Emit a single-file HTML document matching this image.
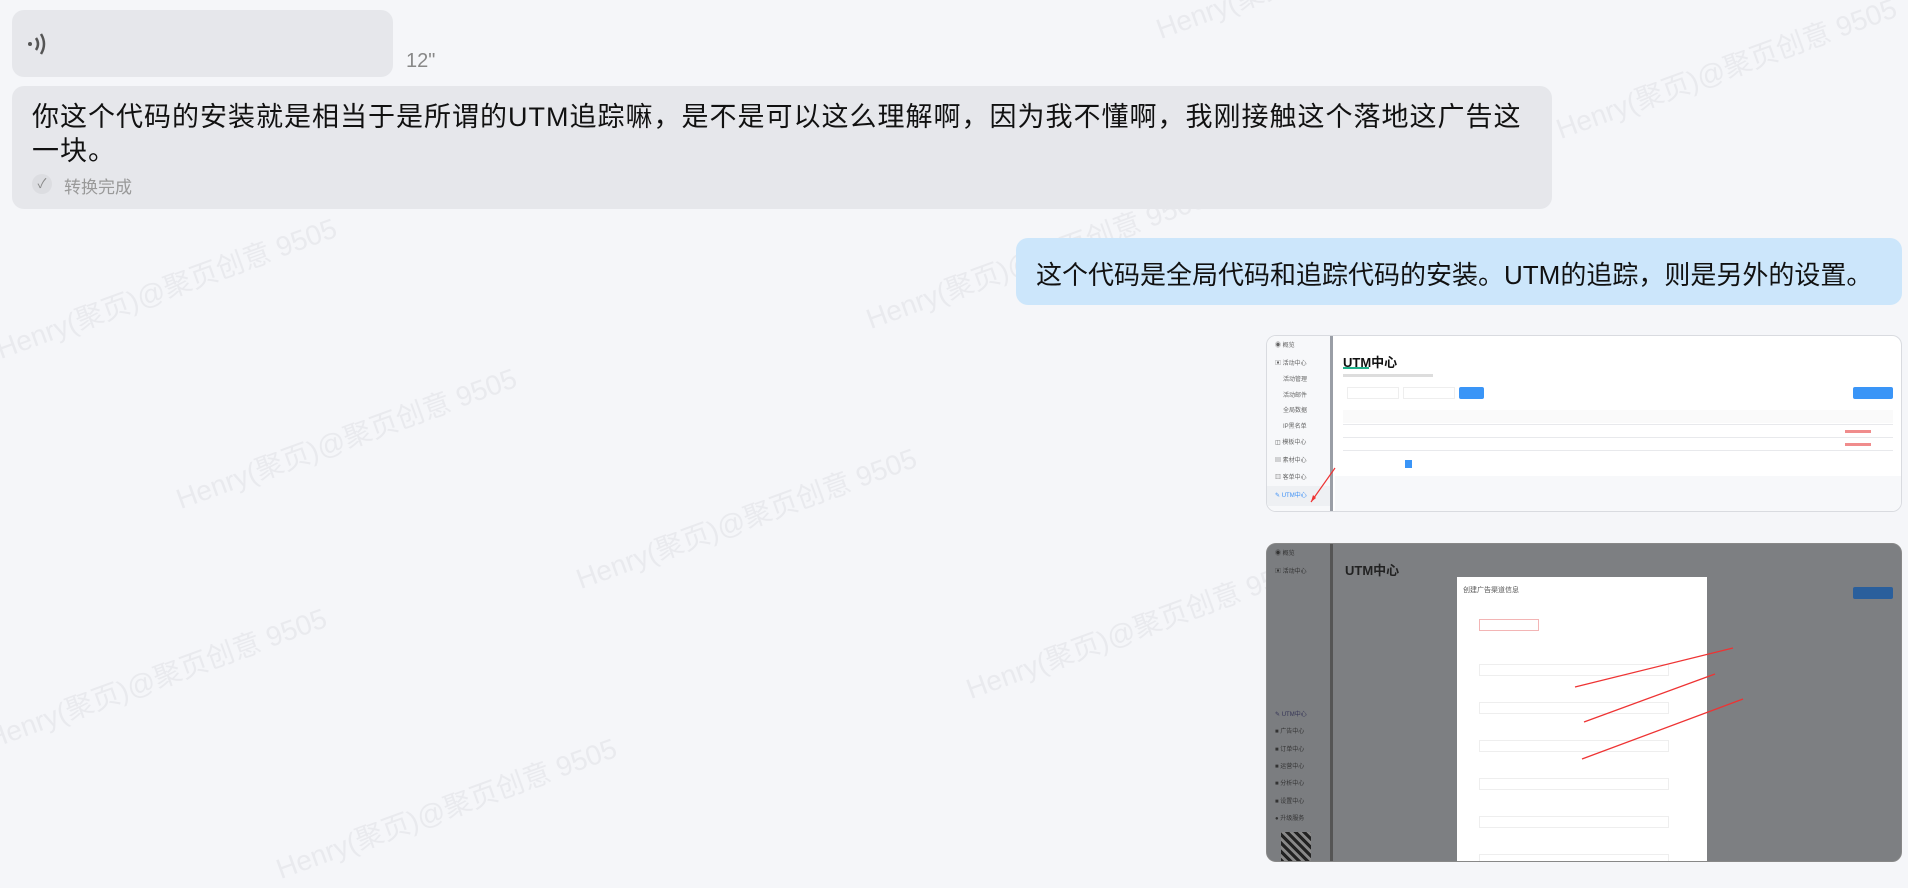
<!DOCTYPE html>
<html><head><meta charset="utf-8"><style>
*{margin:0;padding:0;box-sizing:border-box}
body{width:1908px;height:882px;background:#f5f6f9;position:relative;overflow:hidden;font-family:"Liberation Sans","Noto Sans CJK SC",sans-serif;color:#111}
.b{position:absolute;border-radius:12px}
.wm{position:absolute;color:#e9eaee;font-size:28px;transform:rotate(-20deg);white-space:nowrap;transform-origin:left top}
.shot{position:absolute;border-radius:10px;overflow:hidden;border:1px solid #d9dbe0}
.side{position:absolute;left:0;top:0;bottom:0;width:66px;border-right:3px solid #9a9ea6}
.si{position:absolute;left:8px;font-size:6px;color:#666}
.row{position:absolute;height:1px;background:#e8e9ec}
</style></head><body>
<div class="wm" style="left:-10px;top:330px">Henry(聚页)@聚页创意 9505</div>
<div class="wm" style="left:170px;top:480px">Henry(聚页)@聚页创意 9505</div>
<div class="wm" style="left:570px;top:560px">Henry(聚页)@聚页创意 9505</div>
<div class="wm" style="left:-20px;top:720px">Henry(聚页)@聚页创意 9505</div>
<div class="wm" style="left:270px;top:850px">Henry(聚页)@聚页创意 9505</div>
<div class="wm" style="left:860px;top:300px">Henry(聚页)@聚页创意 9505</div>
<div class="wm" style="left:960px;top:670px">Henry(聚页)@聚页创意 9505</div>
<div class="wm" style="left:1550px;top:110px">Henry(聚页)@聚页创意 9505</div>
<div class="wm" style="left:1150px;top:10px">Henry(聚页)@聚页创意 9505</div>

<div class="b" style="left:12px;top:10px;width:381px;height:67px;background:#e6e7eb"></div>
<svg style="position:absolute;left:26px;top:32px" width="26" height="24" viewBox="0 0 26 24"><circle cx="4" cy="12" r="2" fill="#555"/><path d="M10 6 Q14 12 10 18" stroke="#555" stroke-width="2.5" fill="none"/><path d="M15 2 Q21 12 15 22" stroke="#555" stroke-width="2.5" fill="none"/></svg>
<div style="position:absolute;left:406px;top:50px;font-size:20px;color:#888">12"</div>

<div class="b" style="left:12px;top:86px;width:1540px;height:123px;background:#e6e7eb"></div>
<div style="position:absolute;left:32px;top:100px;white-space:nowrap;font-size:27px;line-height:34px;letter-spacing:1px">你这个代码的安装就是相当于是所谓的UTM追踪嘛，是不是可以这么理解啊，因为我不懂啊，我刚接触这个落地这广告这<br>一块。</div>
<div style="position:absolute;left:32px;top:174px;width:20px;height:20px;border-radius:50%;background:#dcdde1;color:#888;font-size:13px;text-align:center;line-height:20px">✓</div>
<div style="position:absolute;left:64px;top:173px;font-size:17px;color:#999">转换完成</div>

<div class="b" style="left:1016px;top:238px;width:886px;height:67px;background:#cce6fb"></div>
<div style="position:absolute;left:1036px;top:255px;font-size:26px;white-space:nowrap">这个代码是全局代码和追踪代码的安装。UTM的追踪，则是另外的设置。</div>

<div class="shot" style="left:1266px;top:335px;width:636px;height:177px;background:#fff">
 <div class="side" style="background:#f7f8fa">
  <div class="si" style="top:4px">◉ 概览</div><div class="si" style="top:22px">▣ 活动中心</div><div class="si" style="left:16px;top:38px">活动管理</div><div class="si" style="left:16px;top:54px">活动邮件</div><div class="si" style="left:16px;top:69px">全局数据</div><div class="si" style="left:16px;top:85px">IP黑名单</div><div class="si" style="top:101px">◫ 模板中心</div><div class="si" style="top:119px">▤ 素材中心</div><div class="si" style="top:136px">▥ 客单中心</div>
  <div class="si" style="top:150px;left:0;right:0;padding-left:8px;background:#eef0f3;color:#3a8ef6;height:20px;line-height:20px">✎ UTM中心</div>
 </div>
 <div style="position:absolute;left:76px;top:16px;font-size:13px;font-weight:bold">UTM中心</div>
 <div style="position:absolute;left:76px;top:31px;width:26px;height:2px;background:#1fb08a"></div>
 <div style="position:absolute;left:76px;top:38px;width:90px;height:3px;background:#ddd"></div>
 <div style="position:absolute;left:80px;top:51px;width:52px;height:12px;border:1px solid #eee"></div>
 <div style="position:absolute;left:136px;top:51px;width:52px;height:12px;border:1px solid #eee"></div>
 <div style="position:absolute;left:192px;top:51px;width:25px;height:12px;background:#3a95f7;border-radius:2px"></div>
 <div style="position:absolute;right:8px;top:51px;width:40px;height:12px;background:#3a95f7;border-radius:2px"></div>
 <div style="position:absolute;left:76px;top:74px;right:8px;height:13px;background:#fafafa"></div>
 <div class="row" style="left:76px;right:8px;top:88px"></div><div class="row" style="left:76px;right:8px;top:101px"></div><div class="row" style="left:76px;right:8px;top:114px"></div>
 <div style="position:absolute;right:30px;top:94px;width:26px;height:3px;background:#f08c8c"></div>
 <div style="position:absolute;right:30px;top:107px;width:26px;height:3px;background:#f08c8c"></div>
 <div style="position:absolute;left:138px;top:124px;width:7px;height:8px;background:#3a95f7"></div>
 <div style="position:absolute;left:68px;top:140px;width:568px;height:37px;background:#f7f8fa"></div>
 <svg style="position:absolute;left:40px;top:130px" width="30" height="40"><path d="M28 2 L4 36" stroke="#e33" stroke-width="1.2"/><path d="M4 36 L6 29 L9 32Z" fill="#e33"/></svg>
</div>

<div class="shot" style="left:1266px;top:543px;width:636px;height:319px;background:#7d7f82;border-color:#888">
 <div class="side" style="border-right-color:#555;background:#7b7d80">
  <div class="si" style="top:4px;color:#333">◉ 概览</div><div class="si" style="top:22px;color:#333">▣ 活动中心</div><div class="si" style="top:165px;color:#335">✎ UTM中心</div><div class="si" style="top:182px;color:#333">■ 广告中心</div><div class="si" style="top:200px;color:#333">■ 订单中心</div><div class="si" style="top:217px;color:#333">■ 运营中心</div><div class="si" style="top:234px;color:#333">■ 分析中心</div><div class="si" style="top:252px;color:#333">■ 设置中心</div><div class="si" style="top:269px;color:#333">● 升级服务</div>
  <div style="position:absolute;left:14px;top:288px;width:30px;height:30px;background:repeating-linear-gradient(45deg,#222 0 3px,#888 3px 6px)"></div>
 </div>
 <div style="position:absolute;left:78px;top:16px;font-size:13px;font-weight:bold;color:#222">UTM中心</div>
 <div style="position:absolute;right:8px;top:43px;width:40px;height:12px;background:#2a5f9c;border-radius:2px"></div>
 <div style="position:absolute;left:190px;top:33px;width:250px;height:286px;background:#fff">
  <div style="position:absolute;left:6px;top:8px;font-size:7px;color:#555">创建广告渠道信息</div>
  <div style="position:absolute;left:22px;top:42px;width:60px;height:12px;border:1px solid #f3b5b5"></div>
  <div style="position:absolute;left:22px;top:87px;width:190px;height:12px;border:1px solid #eee"></div>
  <div style="position:absolute;left:22px;top:125px;width:190px;height:12px;border:1px solid #eee"></div>
  <div style="position:absolute;left:22px;top:163px;width:190px;height:12px;border:1px solid #eee"></div>
  <div style="position:absolute;left:22px;top:201px;width:190px;height:12px;border:1px solid #eee"></div>
  <div style="position:absolute;left:22px;top:239px;width:190px;height:12px;border:1px solid #eee"></div>
  <div style="position:absolute;left:22px;top:277px;width:190px;height:12px;border:1px solid #eee"></div>
 </div>
 <svg style="position:absolute;left:0;top:0" width="636" height="319"><g stroke="#e33" stroke-width="1.3"><path d="M466 104 L 308 143"/><path d="M448 130 L 317 178"/><path d="M476 155 L 315 215"/></g></svg>
</div>
</body></html>
